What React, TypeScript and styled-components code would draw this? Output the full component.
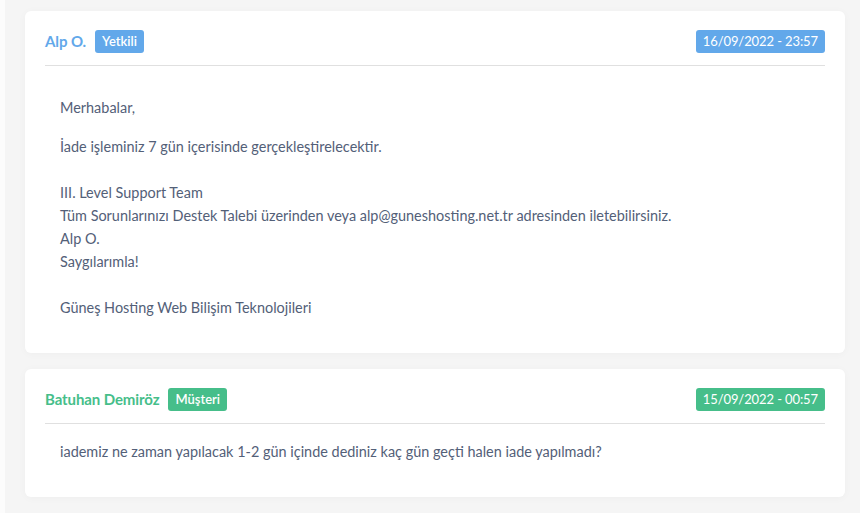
import React from "react";
import styled, { createGlobalStyle } from "styled-components";

const GlobalStyle = createGlobalStyle`
  html, body {
    margin: 0;
    padding: 0;
    background: #f5f5f5;
  }
  body {
    font-family: Lato, "Noto Sans", sans-serif;
    -webkit-font-smoothing: antialiased;
  }
`;

type Tone = "staff" | "client";

const toneColor: Record<Tone, string> = {
  staff: "#62a8ea",
  client: "#46be8a",
};

const Page = styled.div`
  min-height: 513px;
  box-sizing: border-box;
  border-left: 5px solid #fcfcfc;
  padding: 11px 15px 16px 20px;
  display: flex;
  flex-direction: column;
  gap: 16px;
`;

const Card = styled.section`
  background: #fff;
  border-radius: 6px;
  box-shadow: 0 1px 8px rgba(0, 0, 0, 0.03);
  padding: 18px 20px 34px;
`;

const Header = styled.header`
  display: flex;
  align-items: center;
  justify-content: space-between;
  height: 24px;
  padding-bottom: 12px;
  border-bottom: 1px solid #e0e0e0;
`;

const Author = styled.div`
  display: flex;
  align-items: center;
  gap: 9px;
`;

const Name = styled.span<{ $tone: Tone }>`
  color: ${(p) => toneColor[p.$tone]};
  font-size: 15px;
  font-weight: 700;
  letter-spacing: -0.1px;
`;

const Badge = styled.span<{ $tone: Tone }>`
  display: inline-flex;
  align-items: center;
  height: 23px;
  padding: 0 7px;
  border-radius: 3px;
  background: ${(p) => toneColor[p.$tone]};
  color: #fff;
  font-size: 13px;
  font-weight: 600;
`;

const DateBadge = styled(Badge)`
  font-size: 13px;
  font-weight: 400;
  padding: 0 7px;
  letter-spacing: -0.1px;
`;

const Body = styled.div<{ $tone: Tone }>`
  padding: ${(p) => (p.$tone === "staff" ? "30px 15px 0" : "16px 15px 0")};
  color: #536078;
  font-size: 14.45px;
  line-height: 23px;

  p {
    margin: 0 0 16px;
  }
  p:last-child {
    margin-bottom: 0;
  }
`;

export default function App() {
  return (
    <>
      <GlobalStyle />
      <Page>
        <Card>
          <Header>
            <Author>
              <Name $tone="staff">Alp O.</Name>
              <Badge $tone="staff">Yetkili</Badge>
            </Author>
            <DateBadge $tone="staff">16/09/2022 - 23:57</DateBadge>
          </Header>
          <Body $tone="staff">
            <p>Merhabalar,</p>
            <p>
              İade işleminiz 7 gün içerisinde gerçekleştirelecektir.
              <br />
              <br />
              III. Level Support Team
              <br />
              Tüm Sorunlarınızı Destek Talebi üzerinden veya alp@guneshosting.net.tr adresinden iletebilirsiniz.
              <br />
              Alp O.
              <br />
              Saygılarımla!
              <br />
              <br />
              Güneş Hosting Web Bilişim Teknolojileri
            </p>
          </Body>
        </Card>
        <Card>
          <Header>
            <Author>
              <Name $tone="client">Batuhan Demiröz</Name>
              <Badge $tone="client">Müşteri</Badge>
            </Author>
            <DateBadge $tone="client">15/09/2022 - 00:57</DateBadge>
          </Header>
          <Body $tone="client">
            <p>iademiz ne zaman yapılacak 1-2 gün içinde dediniz kaç gün geçti halen iade yapılmadı?</p>
          </Body>
        </Card>
      </Page>
    </>
  );
}
